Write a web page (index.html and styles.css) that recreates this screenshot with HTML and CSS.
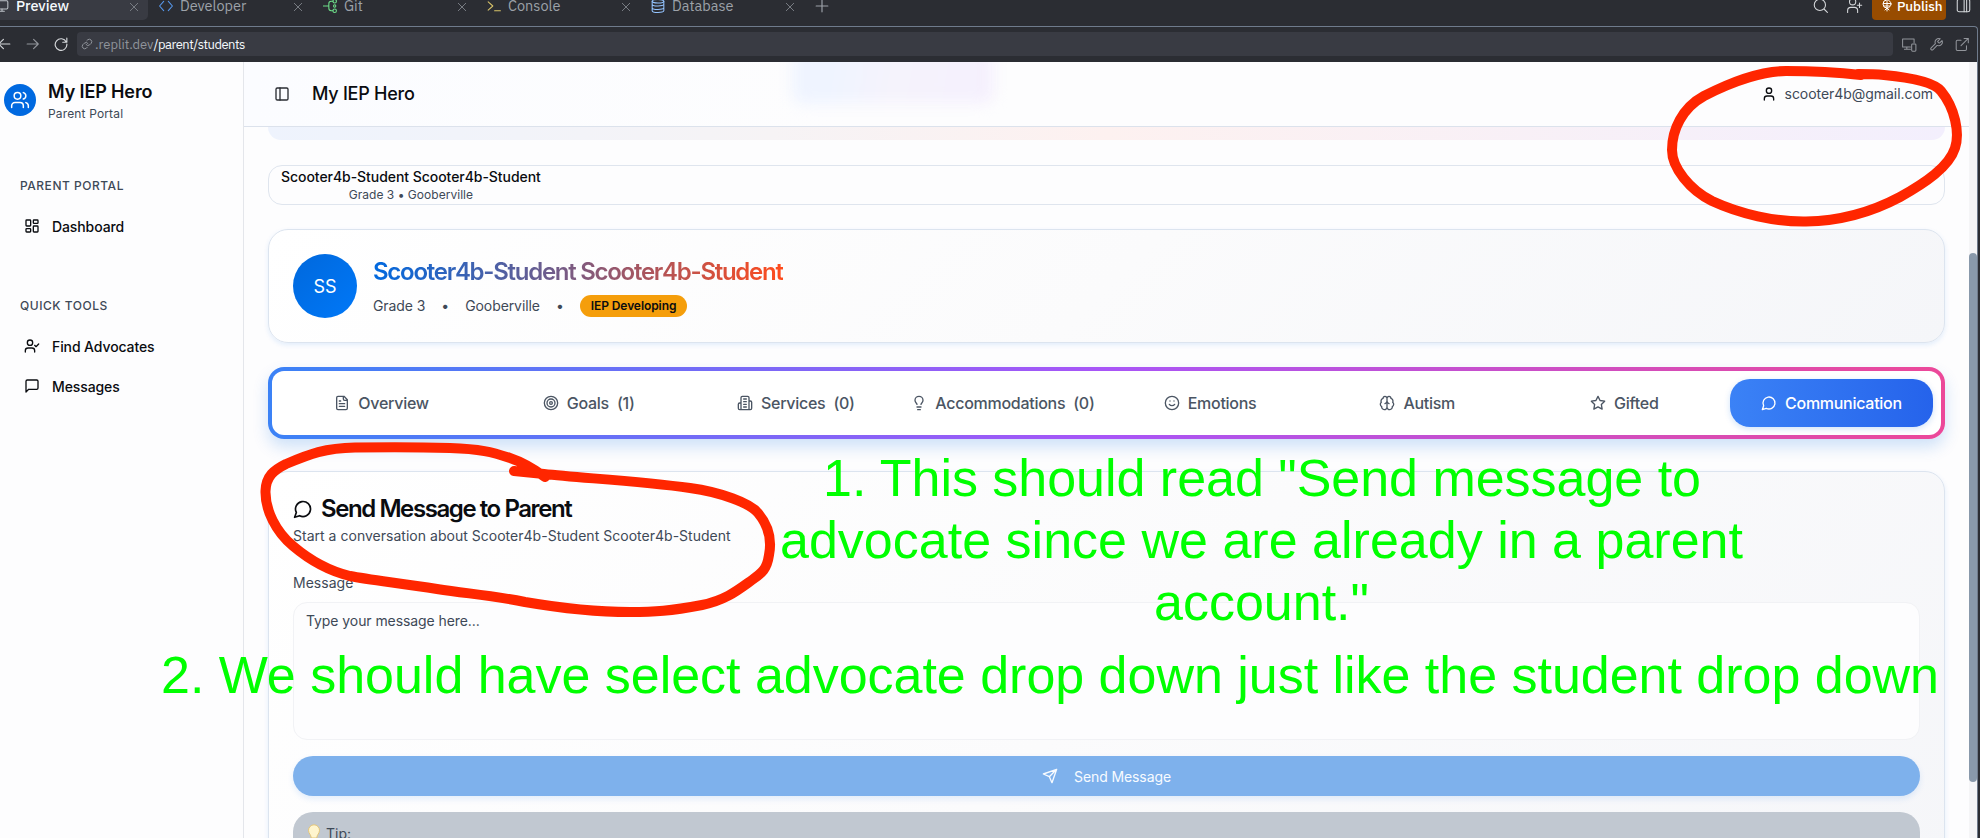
FILE: index.html
```html
<!DOCTYPE html>
<html lang="en">
<head>
<meta charset="utf-8">
<title>My IEP Hero</title>
<link rel="stylesheet" href="styles.css">
</head>
<body>
<div class="screen">
  <div class="tabbar">
    <div class="wtab active"><svg class="i" viewBox="0 0 24 24"><rect x="2" y="3" width="20" height="14" rx="2"/><path d="M8 21h8M12 17v4"/></svg><span>Preview</span><b class="x"></b></div>
    <div class="wtab"><svg class="i blue" viewBox="0 0 24 24"><path d="m8 4-7 8 7 8M16 4l7 8-7 8"/></svg><span>Developer</span><b class="x"></b></div>
    <div class="wtab"><svg class="i green" viewBox="0 0 24 24"><circle cx="20" cy="4" r="3"/><circle cx="20" cy="20" r="3"/><circle cx="20" cy="12" r="2"/><path d="M0 12h10M17 4h-3q-4 0-4 4v8q0 4 4 4h3"/></svg><span>Git</span><b class="x"></b></div>
    <div class="wtab"><svg class="i yellow" viewBox="0 0 24 24"><path d="m2 5 8 7-8 7M13 20h10"/></svg><span>Console</span><b class="x"></b></div>
    <div class="wtab"><svg class="i sky" viewBox="0 0 24 24"><ellipse cx="12" cy="4" rx="10" ry="3"/><path d="M2 4v16c0 4 20 4 20 0V4M2 9c0 4 20 4 20 0M2 15c0 4 20 4 20 0"/></svg><span>Database</span><b class="x"></b></div>
    <svg class="i plus" viewBox="0 0 24 24"><path d="M12 2v20M2 12h20"/></svg>
    <div class="tools">
      <svg class="i" viewBox="0 0 24 24"><circle cx="11" cy="11" r="9"/><path d="m18 18 5 5"/></svg>
      <svg class="i" viewBox="0 0 24 24"><circle cx="9" cy="6" r="5"/><path d="M1 23v-3q0-5 5-5h6q5 0 5 5v3M20 8v7M16.500 11.500h7"/></svg>
      <div class="publish"><svg class="i" viewBox="0 0 24 24"><circle cx="12" cy="9" r="8"/><path d="M12 4v19M5 8h14M7 13h10M8 21l4-4 4 4"/></svg>Publish</div>
      <svg class="i" viewBox="0 0 24 24"><rect x="2" y="2" width="20" height="20" rx="3"/><path d="M13 2v20M17 2v20"/></svg>
    </div>
  </div>
  <div class="pane">
    <div class="address">
      <svg class="i" viewBox="0 0 24 24"><path d="M22 12H3M11 4l-8 8 8 8"/></svg>
      <svg class="i dim" viewBox="0 0 24 24"><path d="M2 12h19M13 4l8 8-8 8"/></svg>
      <svg class="i" viewBox="0 0 24 24"><path d="M21 8.500A10 10 0 1 0 22 12M22 2v7h-7"/></svg>
      <div class="url"><svg class="i" viewBox="0 0 24 24"><path d="M10 13a5 5 0 0 0 7.500.5l3-3a5 5 0 0 0-7-7l-2 2M14 11a5 5 0 0 0-7.500-.5l-3 3a5 5 0 0 0 7 7l2-2"/></svg><span>.replit.dev<em>/parent/students</em></span></div>
      <div class="addr-tools">
        <svg class="i" viewBox="0 0 24 24"><path d="M20 9V3H1v13h13M8 16v4M4 20h10"/><rect x="16" y="11" width="7" height="12" rx="1.500"/></svg>
        <svg class="i" viewBox="0 0 24 24"><path d="M14.700 6.300a1 1 0 0 0 0 1.400l1.600 1.600a1 1 0 0 0 1.400 0l3.800-3.800a6 6 0 0 1-8 8l-6.900 6.900a2.100 2.100 0 0 1-3-3l7-7a6 6 0 0 1 7.900-7.900z"/></svg>
        <svg class="i" viewBox="0 0 24 24"><path d="M19 14v6q0 2-2 2H4q-2 0-2-2V7q0-2 2-2h6M15 2h7v7M22 2 10 14"/></svg>
      </div>
    </div>
    <div class="app">
      <aside class="side">
        <div class="brand">
          <div class="logo"><svg class="i" viewBox="0 0 24 24"><path d="M16 21v-2a4 4 0 0 0-4-4H6a4 4 0 0 0-4 4v2"/><circle cx="9" cy="7" r="4"/><path d="M22 21v-2a4 4 0 0 0-3-3.870M16 3.130a4 4 0 0 1 0 7.750"/></svg></div>
          <div><div class="brand-name">My IEP Hero</div><div class="brand-sub">Parent Portal</div></div>
        </div>
        <h4>PARENT PORTAL</h4>
        <a class="nav"><svg class="i" viewBox="0 0 24 24"><rect x="3" y="3" width="7" height="9" rx="1"/><rect x="14" y="3" width="7" height="5" rx="1"/><rect x="14" y="12" width="7" height="9" rx="1"/><rect x="3" y="16" width="7" height="5" rx="1"/></svg>Dashboard</a>
        <h4 class="second">QUICK TOOLS</h4>
        <a class="nav"><svg class="i" viewBox="0 0 24 24"><path d="M2 21v-2a4 4 0 0 1 4-4h6a4 4 0 0 1 4 4v2"/><circle cx="9" cy="7" r="4"/><path d="m16 11 2 2 4-4"/></svg>Find Advocates</a>
        <a class="nav"><svg class="i" viewBox="0 0 24 24"><path d="M21 15a2 2 0 0 1-2 2H7l-4 4V5a2 2 0 0 1 2-2h14a2 2 0 0 1 2 2z"/></svg>Messages</a>
      </aside>
      <main class="main">
        <header class="head">
          <i class="glow"></i>
          <svg class="i" viewBox="0 0 24 24"><rect x="3" y="3" width="18" height="18" rx="2"/><path d="M9 3v18"/></svg>
          <span class="head-title">My IEP Hero</span>
          <div class="user"><svg class="i" viewBox="0 0 24 24"><path d="M19 21v-2a4 4 0 0 0-4-4H9a4 4 0 0 0-4 4v2"/><circle cx="12" cy="7" r="4"/></svg>scooter4b@gmail.com</div>
        </header>
        <div class="content">
          <div class="banner"></div>
          <div class="select"><div><p>Scooter4b-Student Scooter4b-Student</p><small>Grade 3 • Gooberville</small></div></div>
          <section class="card profile">
            <div class="avatar">SS</div>
            <div>
              <h2>Scooter4b-Student Scooter4b-Student</h2>
              <div class="meta"><span>Grade 3</span><span>•</span><span>Gooberville</span><span>•</span><span class="badge">IEP Developing</span></div>
            </div>
          </section>
          <nav class="tabs">
            <a><svg class="i" viewBox="0 0 24 24"><path d="M15 2H6a2 2 0 0 0-2 2v16a2 2 0 0 0 2 2h12a2 2 0 0 0 2-2V7zM14 2v4a2 2 0 0 0 2 2h4M10 9H8M16 13H8M16 17H8"/></svg>Overview</a>
            <a><svg class="i" viewBox="0 0 24 24"><circle cx="12" cy="12" r="10"/><circle cx="12" cy="12" r="6"/><circle cx="12" cy="12" r="2"/></svg>Goals<span>(1)</span></a>
            <a><svg class="i" viewBox="0 0 24 24"><path d="M6 22V4a2 2 0 0 1 2-2h8a2 2 0 0 1 2 2v18ZM6 12H4a2 2 0 0 0-2 2v6a2 2 0 0 0 2 2h2M18 9h2a2 2 0 0 1 2 2v9a2 2 0 0 1-2 2h-2M10 6h4M10 10h4M10 14h4M10 18h4"/></svg>Services<span>(0)</span></a>
            <a><svg class="i" viewBox="0 0 24 24"><path d="M15 14c.2-1 .7-1.700 1.500-2.500 1-.9 1.500-2.200 1.500-3.500A6 6 0 0 0 6 8c0 1 .2 2.200 1.500 3.500.7.7 1.300 1.500 1.500 2.500M9 18h6M10 22h4"/></svg>Accommodations<span>(0)</span></a>
            <a><svg class="i" viewBox="0 0 24 24"><circle cx="12" cy="12" r="10"/><path d="M8 14s1.500 2 4 2 4-2 4-2M9 9h.01M15 9h.01"/></svg>Emotions</a>
            <a><svg class="i" viewBox="0 0 24 24"><path d="M12 5a3 3 0 1 0-5.997.125 4 4 0 0 0-2.526 5.770 4 4 0 0 0 .556 6.588A4 4 0 1 0 12 18ZM12 5a3 3 0 1 1 5.997.125 4 4 0 0 1 2.526 5.770 4 4 0 0 1-.556 6.588A4 4 0 1 1 12 18ZM15 13a4.500 4.500 0 0 1-3-4 4.500 4.500 0 0 1-3 4"/></svg>Autism</a>
            <a><svg class="i" viewBox="0 0 24 24"><path d="m12 2 3.100 6.300 6.900 1-5 4.900 1.200 6.900-6.200-3.300-6.200 3.300L7 14.200 2 9.300l6.900-1z"/></svg>Gifted</a>
            <a class="on"><svg class="i" viewBox="0 0 24 24"><path d="M7.900 20A9 9 0 1 0 4 16.100L2 22Z"/></svg>Communication</a>
          </nav>
          <section class="card message">
            <h3><svg class="i" viewBox="0 0 24 24"><path d="M7.900 20A9 9 0 1 0 4 16.100L2 22Z"/></svg>Send Message to Parent</h3>
            <p class="sub">Start a conversation about Scooter4b-Student Scooter4b-Student</p>
            <label>Message</label>
            <div class="area">Type your message here...</div>
            <div class="send"><svg class="i" viewBox="0 0 24 24"><path d="m22 2-7 20-4-9-9-4ZM22 2 11 13"/></svg>Send Message</div>
            <div class="tip"><svg viewBox="0 0 14 20"><path class="bulb" d="M7 .8a5.500 5.500 0 0 0-5.500 5.600C1.500 9.500 4 10.500 4.300 14h5.400c.3-3.500 2.800-4.500 2.800-7.600A5.500 5.500 0 0 0 7 .8z"/><path class="base" d="M4.500 14h5v4h-5z"/></svg>Tip:</div>
          </section>
        </div>
      </main>
      <div class="track"><div class="thumb"></div></div>
    </div>
  </div>
  <svg class="notes" viewBox="0 0 1980 838">
    <path d="M1861 75C1835 72 1805 71 1786 71C1765 71 1735 80 1704 96C1682 108 1672 130 1672 150C1672 168 1690 190 1712 201C1740 214 1775 222 1806 221.500C1840 221 1870 213 1900 197C1925 183 1949 167 1955 148C1960 133 1955 108 1941 91C1933 81 1905 77 1884 75C1875 74 1863 74 1858 74"/>
    <path d="M514 471L544 474C580 478 640 481 690 488C720 492 750 503 758 513C768 525 772 540 769 555C767 569 762 573 752 580C738 590 726 600 702 605C670 611 655 612 630 612C590 612 560 608 525 602C490 595 470 594 437 589C400 583 370 580 350 576C325 570 306 557 293 546C276 532 265 510 265.500 491C266 476 274 470 286 464C310 454 325 448 355 447.500C385 447 420 447 450 448C480 449 492 452 510 458C525 463 534 469 545 477"/>
    <text x="823" y="496" textLength="878">1. This should read "Send message to</text>
    <text x="780" y="558" textLength="963">advocate since we are already in a parent</text>
    <text x="1154" y="620" textLength="215">account."</text>
    <text x="161" y="692.500" textLength="1778">2. We should have select advocate drop down just like the student drop down</text>
  </svg>
</div>
</body>
</html>
```
FILE: styles.css
```css
* { box-sizing: border-box; }
body { margin: 0; font-family: Inter, "Liberation Sans", sans-serif; }
h2, h3, h4, p { margin: 0; }
.screen { position: relative; width: 1980px; height: 838px; overflow: hidden; background: #2b2d33; display: flex; flex-direction: column; }
.i { width: 16px; height: 16px; flex: none; fill: none; stroke: currentColor; stroke-width: 2; stroke-linecap: round; stroke-linejoin: round; }

/* workspace tabs */
.tabbar { height: 26px; flex: none; display: flex; align-items: flex-start; font: 14px "IBM Plex Sans", Roboto, sans-serif; color: #9da2a9; }
.wtab { width: 164px; height: 20px; display: flex; align-items: center; gap: 7px; padding: 0 10px 8px 11px; }
.wtab span { flex: 1; font-size: 14.500px; line-height: 14px; }
.wtab .i { width: 14px; height: 14px; stroke-width: 1.800; }
.wtab.active { width: 148px; background: #393b43; color: #f5f9fc; padding: 0 10px 8px 0; border-radius: 0 0 5px 0; gap: 7px; }
.wtab.active .i { width: 14px; margin-left: -5px; color: #bfc4ca; }
.wtab.active span { font-weight: 500; }
.wtab .x { width: 8px; height: 8px; background: linear-gradient(45deg, transparent 45%, #777b82 45% 55%, transparent 55%), linear-gradient(-45deg, transparent 45%, #777b82 45% 55%, transparent 55%); margin-top: 1px; }
.blue { color: #5799ef; } .green { color: #6ee08a; } .yellow { color: #d8c36a; } .sky { color: #94c4ff; }
.plus { width: 14px; height: 14px; margin: -1px 0 0 11px; }
.tools { margin-left: auto; display: flex; align-items: flex-start; color: #d4d7da; padding-right: 9px; }
.tools > .i { width: 15px; height: 15px; margin: -2px 18px 0 0; stroke-width: 1.700; }
.tools > .i:last-child { margin: -2px 0 0 10px; }
.tools > .i:nth-child(2) { width: 17px; margin-right: 9px; }
.publish { width: 74px; height: 20px; background: #984c00; color: #fff; border-radius: 0 0 4px 4px; display: flex; gap: 4px; align-items: center; padding: 0 0 9px 9px; font-size: 13.500px; line-height: 14px; font-weight: 500; letter-spacing: -.1px; }
.publish .i { width: 12px; height: 13px; }

.pane { width: 1978px; flex: 1; min-height: 0; border: solid #6f7b8c; border-width: 1px 1px 0 0; border-radius: 0 4px 0 0; display: flex; flex-direction: column; }
.address { height: 35px; flex: none; display: flex; align-items: center; color: #d4d7da; font: 13px "IBM Plex Sans", Roboto, sans-serif; padding-bottom: 1px; }
.address > .i { margin-left: -3px; width: 14px; height: 14px; }
.address > .dim { margin-left: 15px; color: #92959b; }
.address > .i:nth-child(3) { margin-left: 14px; }
.url { margin-left: 9px; width: 1816px; height: 24px; border-radius: 4px; background: #393b43; display: flex; align-items: center; gap: 2px; padding-left: 4px; color: #90949b; }
.url .i { width: 12px; height: 12px; }
.url em { font-style: normal; color: #f5f9fc; letter-spacing: -.5px; }
.addr-tools { display: flex; gap: 12px; margin-left: 9px; color: #92959b; }
.addr-tools .i { width: 14.500px; height: 15px; stroke-width: 1.700; }

.app { flex: 1; min-height: 0; display: flex; background: #fdfdfe; overflow: hidden; }
.side { width: 244px; flex: none; border-right: 1px solid #e4e6eb; background: #fdfdfe; color: #0a0c10; }
.brand { display: flex; align-items: flex-start; gap: 12px; padding: 22px 0 0 4px; height: 72px; margin-bottom: 44px; }
.logo { width: 32px; height: 32px; border-radius: 50%; background: #0069e0; color: #fff; display: grid; place-items: center; }
.logo .i { width: 20px; height: 20px; stroke-width: 1.800; }
.brand > div:last-child { margin-top: -4px; }
.brand-name { font-size: 18px; font-weight: 600; line-height: 24px; letter-spacing: -.12px; }
.brand-sub { font-size: 12px; line-height: 20px; color: #3e4957; letter-spacing: .15px; }
.side h4 { font-size: 12px; font-weight: 500; letter-spacing: .52px; line-height: 16px; color: #3e4957; margin: 3px 0 12px 20px; }
.side h4.second { margin: 52px 0 12px 20px; }
.nav { display: flex; align-items: center; gap: 12px; height: 40px; padding-left: 24px; font-size: 14px; font-weight: 500; letter-spacing: -.1px; }

.main { flex: 1; min-width: 0; display: flex; flex-direction: column; }
.head { height: 65px; flex: none; position: relative; border-bottom: 1px solid #dce2ec; display: flex; align-items: center; padding: 0 36px 1px 30px; color: #0a0c10; overflow: hidden; background: linear-gradient(90deg, #fbfcff, #fdfdfe 35%); }
.head > .i { color: #2a2d33; }
.head-title { font-size: 18px; font-weight: 500; margin-left: 22px; letter-spacing: -.25px; }
.glow { position: absolute; left: 548px; top: -12px; width: 202px; height: 54px; border-radius: 12px; background: linear-gradient(100deg, #eff4ff 20%, #f5f3fc 50%, #f5f0fd); filter: blur(7px); }
.user { margin-left: auto; display: flex; align-items: center; gap: 8px; font-size: 14px; color: #3e4957; letter-spacing: -.05px; }
.user .i { color: #0a0c10; }
.content { flex: 1; min-height: 0; overflow: hidden; padding: 0 24px; display: flex; flex-direction: column; }
.content > * { flex: none; }
.banner { height: 13px; border-radius: 0 0 16px 16px; background: linear-gradient(90deg, #eef3fd, #f6f3f5 30%, #fdf1f0 50%, #f3effd); }
.select { margin-top: 25px; height: 40px; border: 1px solid #dfe5ee; border-radius: 14px; padding: 1px 12px; display: flex; color: #0a0c10; text-align: center; }
.select p { font-size: 14px; font-weight: 500; line-height: 20px; letter-spacing: -.05px; }
.select small { display: block; font-size: 12px; line-height: 15px; color: #3e4957; letter-spacing: .03px; }
.card { border: 1px solid #dce4ef; border-radius: 20px; background: linear-gradient(135deg, #fff, #fbfbfc 50%, #f5f6f9); box-shadow: 0 2px 5px #0069e01c; }
.profile { margin-top: 24px; height: 114px; padding: 0 24px; display: flex; align-items: center; gap: 16px; }
.avatar { width: 64px; height: 64px; border-radius: 50%; background: linear-gradient(135deg, #0068dc, #0078f8); color: #fff; display: grid; place-items: center; font-size: 18px; }
.profile h2 { width: max-content; font-size: 24px; line-height: 32px; font-weight: 600; letter-spacing: -1.270px; background: linear-gradient(90deg, #0069e0, #ff4b1c); -webkit-background-clip: text; background-clip: text; color: transparent; }
.meta { display: flex; align-items: center; gap: 16px; font-size: 14px; color: #3e4957; margin-top: 7px; letter-spacing: -.08px; }
.badge { height: 22px; line-height: 22px; border-radius: 11px; background: #f59e0b; color: #0a0c10; font-size: 12px; font-weight: 600; padding: 0 11px; }
.tabs { margin-top: 24px; height: 72px; border: 4px solid transparent; border-radius: 16px; background: linear-gradient(#fff, #fff) padding-box, linear-gradient(90deg, #3b82f6, #a855f7 50%, #ec4899) border-box; padding: 8px; display: grid; grid-template-columns: repeat(8, 1fr); gap: 4px; box-shadow: 0 8px 16px #0069e030; font-size: 16px; font-weight: 500; letter-spacing: -.28px; color: #4b5563; }
.tabs a { display: flex; align-items: center; justify-content: center; gap: 8px; border-radius: 20px; }
.tabs .on { color: #fff; background: linear-gradient(90deg, #3b82f6, #2563eb); box-shadow: 0 2px 6px #0069e030; }
.message { margin-top: 32px; height: 420px; padding: 24px; }
.message h3 { display: flex; align-items: center; gap: 8px; font-size: 24px; line-height: 26px; font-weight: 600; letter-spacing: -1.420px; color: #0a0c10; }
.message h3 .i { width: 20px; height: 20px; }
.message .sub, .message label { display: block; font-size: 14px; line-height: 20px; color: #3e4957; letter-spacing: .02px; }
.message .sub { margin-top: 4px; }
.message label { margin-top: 27px; }
.area { margin-top: 9px; height: 138px; border: 1px solid #f1f2f5; border-radius: 14px; background: #fdfdfe; padding: 8px 12px; font-size: 14px; line-height: 20px; color: #3e4957; letter-spacing: -.08px; }
.send { margin-top: 16px; height: 40px; border-radius: 20px; background: #7eb1ec; color: #f8fbff; display: flex; align-items: center; justify-content: center; gap: 16px; font-size: 14px; letter-spacing: -.1px; box-shadow: 0 3px 6px #0069e01c; }
.tip { margin-top: 16px; height: 80px; border-radius: 20px; background: #c1c8d1; display: flex; gap: 5px; padding: 12px 14px; font-size: 14px; line-height: 20px; color: #3e4957; }
.tip svg { width: 14px; height: 20px; }
.bulb { fill: #fff5ce; stroke: #e5c678; }
.base { fill: #929eaa; }
.track { width: 8px; flex: none; background: #f5f5f7; padding-top: 191px; }
.thumb { height: 529px; border-radius: 4px; background: #8999ab; }

/* annotations float over the whole window */
.notes { position: absolute; left: 0; top: 0; width: 1980px; height: 838px; }
.notes path { fill: none; stroke: #ff2600; stroke-width: 10; stroke-linecap: round; stroke-linejoin: round; }
.notes text { font: 52px "Liberation Sans", sans-serif; fill: #00ff00; }
```
